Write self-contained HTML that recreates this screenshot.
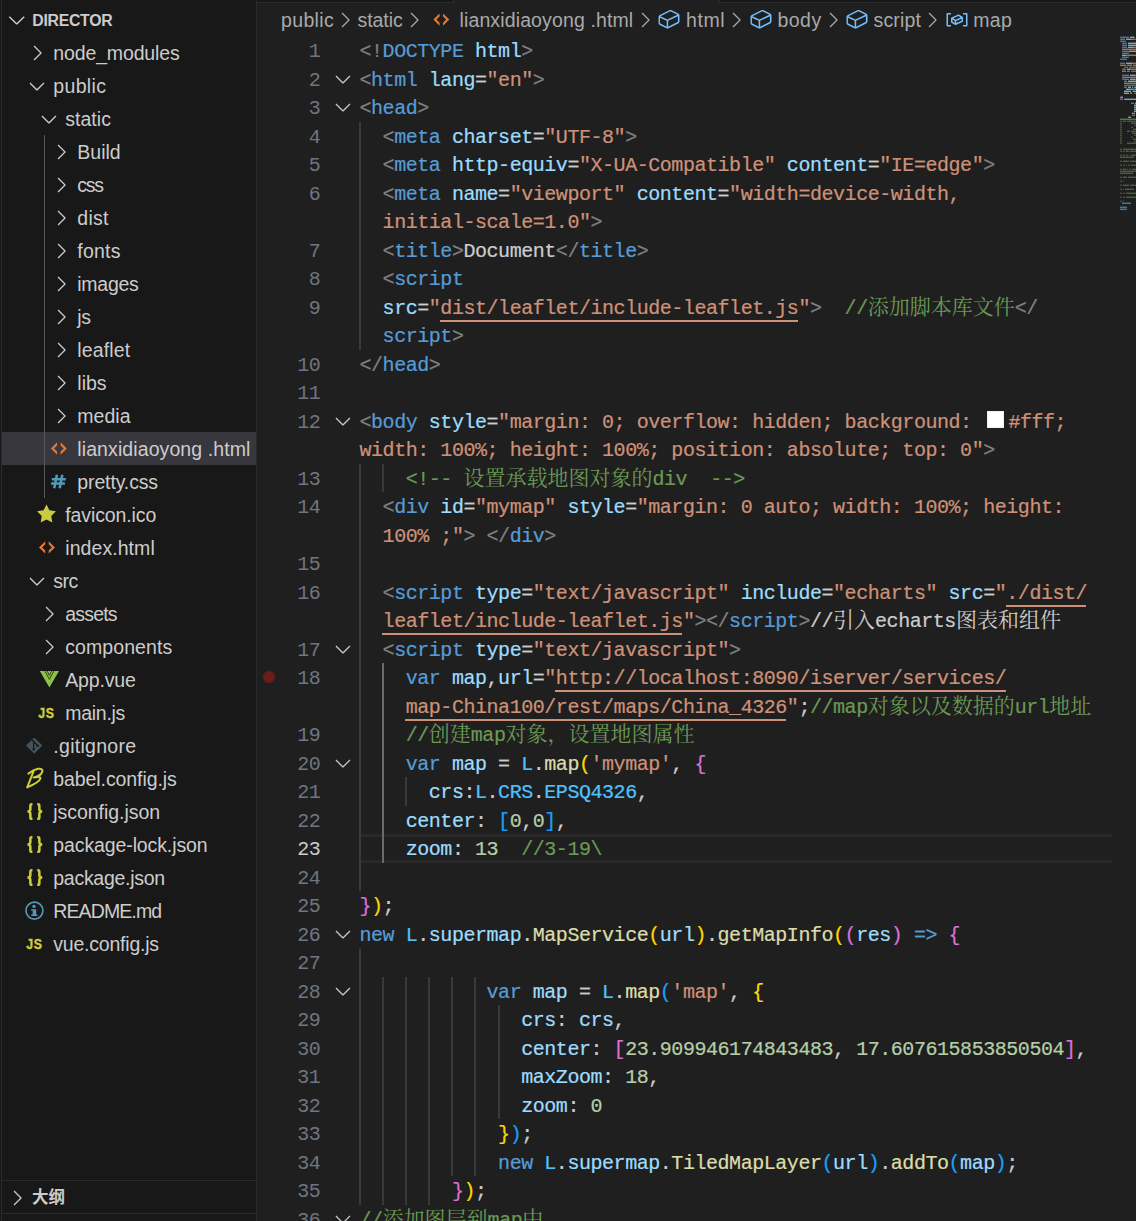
<!DOCTYPE html>
<html><head><meta charset="utf-8"><title>vscode</title>
<style>
html,body{margin:0;padding:0}
body{width:1136px;height:1221px;background:#1f1f1f;position:relative;overflow:hidden;font-family:"Liberation Sans",sans-serif}
div,span,svg{box-sizing:content-box}
.m{position:absolute;font-family:"Liberation Mono",monospace;font-size:20.0px;line-height:28.5px;height:28.5px;letter-spacing:-0.4520px;white-space:pre;-webkit-text-stroke:0.22px}
.c{position:absolute;font-family:"Liberation Mono","Noto Serif CJK SC",monospace;font-size:21px;line-height:28.5px;height:28.5px;letter-spacing:0;white-space:pre}
.ln{position:absolute;font-family:"Liberation Mono",monospace;font-size:20.0px;line-height:28.5px;height:28.5px;letter-spacing:-0.4520px;white-space:pre;color:#6e7681;text-align:right;width:60px;left:260.25px}
.t{position:absolute;font-size:19.5px;line-height:33px;height:33px;white-space:pre;color:#cccccc}
.bc{position:absolute;font-size:19.5px;line-height:33px;height:33px;white-space:pre;color:#a9a9a9;top:3.5px}
.ig{position:absolute;width:2px;background:#404040}
</style></head><body>

<div style="position:absolute;left:0;top:0;width:257px;height:1221px;background:#181818"></div>
<div style="position:absolute;left:1px;top:0;width:1px;height:1221px;background:#2b2b2b"></div>
<div style="position:absolute;left:256px;top:0;width:1px;height:1221px;background:#2b2b2b"></div>
<div style="position:absolute;left:257px;top:0;width:196px;height:2px;background:#181818"></div>
<div style="position:absolute;left:257px;top:2px;width:197px;height:1px;background:#2b2b2b"></div>
<div style="position:absolute;left:453px;top:0;width:1px;height:3px;background:#2b2b2b"></div>
<div style="position:absolute;left:719px;top:0;width:1px;height:3px;background:#2b2b2b"></div>
<div style="position:absolute;left:720px;top:0;width:416px;height:2px;background:#181818"></div>
<div style="position:absolute;left:720px;top:2px;width:416px;height:1px;background:#2b2b2b"></div>
<div style="position:absolute;left:2px;top:432px;width:254px;height:33px;background:#37373d"></div><div style="position:absolute;left:44px;top:135px;width:1px;height:363px;background:#585858"></div><svg style="position:absolute;left:3.7px;top:6.9px" width="25.6" height="25.6" viewBox="0 0 16 16" fill="#cccccc"><path d="M7.976 10.072l4.357-4.357.62.618L8.284 11h-.618L3 6.333l.619-.618 4.357 4.357z"/></svg><span id="hdr" style="position:absolute;left:32.3px;top:4px;font-size:15.8px;font-weight:bold;line-height:33px;color:#cccccc;white-space:pre;letter-spacing:-0.277px">DIRECTOR</span><svg style="position:absolute;left:24.6px;top:40.5px" width="24" height="24" viewBox="0 0 16 16" fill="#cccccc"><path d="M10.072 8.024L5.715 3.667l.618-.62L11 7.716v.618L6.333 13l-.618-.619 4.357-4.357z"/></svg><span class="t" style="left:53.3px;top:36.8px;letter-spacing:-0.136px">node_modules</span><svg style="position:absolute;left:24.6px;top:73.5px" width="24" height="24" viewBox="0 0 16 16" fill="#cccccc"><path d="M7.976 10.072l4.357-4.357.62.618L8.284 11h-.618L3 6.333l.619-.618 4.357 4.357z"/></svg><span class="t" style="left:53.3px;top:69.8px;letter-spacing:0.342px">public</span><svg style="position:absolute;left:36.6px;top:106.5px" width="24" height="24" viewBox="0 0 16 16" fill="#cccccc"><path d="M7.976 10.072l4.357-4.357.62.618L8.284 11h-.618L3 6.333l.619-.618 4.357 4.357z"/></svg><span class="t" style="left:65.3px;top:102.8px;letter-spacing:0.015px">static</span><svg style="position:absolute;left:48.6px;top:139.5px" width="24" height="24" viewBox="0 0 16 16" fill="#cccccc"><path d="M10.072 8.024L5.715 3.667l.618-.62L11 7.716v.618L6.333 13l-.618-.619 4.357-4.357z"/></svg><span class="t" style="left:77.3px;top:135.8px;letter-spacing:0.006px">Build</span><svg style="position:absolute;left:48.6px;top:172.5px" width="24" height="24" viewBox="0 0 16 16" fill="#cccccc"><path d="M10.072 8.024L5.715 3.667l.618-.62L11 7.716v.618L6.333 13l-.618-.619 4.357-4.357z"/></svg><span class="t" style="left:77.3px;top:168.8px;letter-spacing:-1.216px">css</span><svg style="position:absolute;left:48.6px;top:205.5px" width="24" height="24" viewBox="0 0 16 16" fill="#cccccc"><path d="M10.072 8.024L5.715 3.667l.618-.62L11 7.716v.618L6.333 13l-.618-.619 4.357-4.357z"/></svg><span class="t" style="left:77.3px;top:201.8px;letter-spacing:0.236px">dist</span><svg style="position:absolute;left:48.6px;top:238.5px" width="24" height="24" viewBox="0 0 16 16" fill="#cccccc"><path d="M10.072 8.024L5.715 3.667l.618-.62L11 7.716v.618L6.333 13l-.618-.619 4.357-4.357z"/></svg><span class="t" style="left:77.3px;top:234.8px;letter-spacing:0.224px">fonts</span><svg style="position:absolute;left:48.6px;top:271.5px" width="24" height="24" viewBox="0 0 16 16" fill="#cccccc"><path d="M10.072 8.024L5.715 3.667l.618-.62L11 7.716v.618L6.333 13l-.618-.619 4.357-4.357z"/></svg><span class="t" style="left:77.3px;top:267.8px;letter-spacing:-0.262px">images</span><svg style="position:absolute;left:48.6px;top:304.5px" width="24" height="24" viewBox="0 0 16 16" fill="#cccccc"><path d="M10.072 8.024L5.715 3.667l.618-.62L11 7.716v.618L6.333 13l-.618-.619 4.357-4.357z"/></svg><span class="t" style="left:77.3px;top:300.8px;letter-spacing:-0.395px">js</span><svg style="position:absolute;left:48.6px;top:337.5px" width="24" height="24" viewBox="0 0 16 16" fill="#cccccc"><path d="M10.072 8.024L5.715 3.667l.618-.62L11 7.716v.618L6.333 13l-.618-.619 4.357-4.357z"/></svg><span class="t" style="left:77.3px;top:333.8px;letter-spacing:0.137px">leaflet</span><svg style="position:absolute;left:48.6px;top:370.5px" width="24" height="24" viewBox="0 0 16 16" fill="#cccccc"><path d="M10.072 8.024L5.715 3.667l.618-.62L11 7.716v.618L6.333 13l-.618-.619 4.357-4.357z"/></svg><span class="t" style="left:77.3px;top:366.8px;letter-spacing:0.009px">libs</span><svg style="position:absolute;left:48.6px;top:403.5px" width="24" height="24" viewBox="0 0 16 16" fill="#cccccc"><path d="M10.072 8.024L5.715 3.667l.618-.62L11 7.716v.618L6.333 13l-.618-.619 4.357-4.357z"/></svg><span class="t" style="left:77.3px;top:399.8px;letter-spacing:0.036px">media</span><span class="t" style="left:77.3px;top:432.8px;letter-spacing:0.097px">lianxidiaoyong .html</span><span class="t" style="left:77.3px;top:465.8px;letter-spacing:-0.130px">pretty.css</span><span class="t" style="left:65.3px;top:498.8px;letter-spacing:-0.113px">favicon.ico</span><span class="t" style="left:65.3px;top:531.8px;letter-spacing:0.063px">index.html</span><svg style="position:absolute;left:24.6px;top:568.5px" width="24" height="24" viewBox="0 0 16 16" fill="#cccccc"><path d="M7.976 10.072l4.357-4.357.62.618L8.284 11h-.618L3 6.333l.619-.618 4.357 4.357z"/></svg><span class="t" style="left:53.3px;top:564.8px;letter-spacing:-0.532px">src</span><svg style="position:absolute;left:36.6px;top:601.5px" width="24" height="24" viewBox="0 0 16 16" fill="#cccccc"><path d="M10.072 8.024L5.715 3.667l.618-.62L11 7.716v.618L6.333 13l-.618-.619 4.357-4.357z"/></svg><span class="t" style="left:65.3px;top:597.8px;letter-spacing:-0.809px">assets</span><svg style="position:absolute;left:36.6px;top:634.5px" width="24" height="24" viewBox="0 0 16 16" fill="#cccccc"><path d="M10.072 8.024L5.715 3.667l.618-.62L11 7.716v.618L6.333 13l-.618-.619 4.357-4.357z"/></svg><span class="t" style="left:65.3px;top:630.8px;letter-spacing:0.067px">components</span><span class="t" style="left:65.3px;top:663.8px;letter-spacing:-0.180px">App.vue</span><span class="t" style="left:65.3px;top:696.8px;letter-spacing:-0.283px">main.js</span><span class="t" style="left:53.3px;top:729.8px;letter-spacing:0.288px">.gitignore</span><span class="t" style="left:53.3px;top:762.8px;letter-spacing:-0.085px">babel.config.js</span><span class="t" style="left:53.3px;top:795.8px;letter-spacing:-0.047px">jsconfig.json</span><span class="t" style="left:53.3px;top:828.8px;letter-spacing:-0.111px">package-lock.json</span><span class="t" style="left:53.3px;top:861.8px;letter-spacing:-0.285px">package.json</span><span class="t" style="left:53.3px;top:894.8px;letter-spacing:-0.893px">README.md</span><span class="t" style="left:53.3px;top:927.8px;letter-spacing:-0.216px">vue.config.js</span><svg style="position:absolute;left:0;top:0" width="256" height="1221" viewBox="0 0 256 1221"><path fill="#e37933" d="M57.10 442.30 L50.90 448.50 L57.10 454.70 L57.10 451.60 L54.00 448.50 L57.10 445.40Z M60.60 442.30 L66.80 448.50 L60.60 454.70 L60.60 451.60 L63.70 448.50 L60.60 445.40Z"/><path fill="none" stroke="#519aba" stroke-width="2.5" d="M56.90 474.70 L54.20 488.20 M62.30 474.70 L59.70 488.20 M51.80 479.20 H65.80 M51.10 483.50 H64.90"/><path fill="#cbcb41" d="M46.50 504.50 L49.44 510.35 L55.92 511.34 L51.26 515.95 L52.32 522.41 L46.50 519.40 L40.68 522.41 L41.74 515.95 L37.08 511.34 L43.56 510.35Z"/><path fill="#e37933" d="M45.20 541.20 L39.00 547.40 L45.20 553.60 L45.20 550.50 L42.10 547.40 L45.20 544.30Z M48.70 541.20 L54.90 547.40 L48.70 553.60 L48.70 550.50 L51.80 547.40 L48.70 544.30Z"/><path fill="#8dc149" d="M39.8 671.1 H59.0 L49.4 687.6 Z"/><path fill="none" stroke="#181818" stroke-opacity="0.75" stroke-width="1" d="M44.699999999999996 670.6 L49.4 679.4 L54.099999999999994 670.6 M47.0 670.6 L49.4 675.5 L51.8 670.6"/><text x="0" y="0" transform="translate(38.3 718.1) scale(0.80 1)" font-family="Liberation Sans, sans-serif" font-weight="bold" font-size="15.4" fill="#cbcb41" stroke="#cbcb41" stroke-width="0.45" letter-spacing="0.9">JS</text><path fill="#41535b" d="M34.2 737.4 L42.400000000000006 745.6 L34.2 753.8000000000001 L26.000000000000004 745.6 Z"/><path fill="none" stroke="#181818" stroke-width="1.3" d="M32.0 739.7 L37.6 745.6 M33.7 741.4 V749.1"/><circle cx="33.7" cy="749.3000000000001" r="1.2" fill="#181818"/><circle cx="37.7" cy="745.8000000000001" r="1.2" fill="#181818"/><path fill="none" stroke="#d0d03a" stroke-width="2" stroke-linecap="round" stroke-linejoin="round" d="M28.4 773.6 C31.5 771.2 35.0 769.4 38.0 768.8 C42.5 768.0 43.6 770.6 41.0 774.0 C39.0 776.2 36.5 777.0 33.5 777.6 C37.0 776.6 41.0 776.4 40.4 778.6 C39.5 781.8 33.0 785.0 27.2 787.4 M33.6 771.2 L27.2 787.4"/><path fill="none" stroke="#cbcb41" stroke-width="2.5" d="M32.45 804.35 H31.65 Q30.35 804.35 30.35 806.00 V809.30 Q30.35 811.60 27.45 811.60 Q30.35 811.60 30.35 813.90 V817.20 Q30.35 818.85 31.65 818.85 H32.45 M37.25 804.35 H38.05 Q39.35 804.35 39.35 806.00 V809.30 Q39.35 811.60 42.25 811.60 Q39.35 811.60 39.35 813.90 V817.20 Q39.35 818.85 38.05 818.85 H37.25"/><path fill="none" stroke="#cbcb41" stroke-width="2.5" d="M32.45 837.35 H31.65 Q30.35 837.35 30.35 839.00 V842.30 Q30.35 844.60 27.45 844.60 Q30.35 844.60 30.35 846.90 V850.20 Q30.35 851.85 31.65 851.85 H32.45 M37.25 837.35 H38.05 Q39.35 837.35 39.35 839.00 V842.30 Q39.35 844.60 42.25 844.60 Q39.35 844.60 39.35 846.90 V850.20 Q39.35 851.85 38.05 851.85 H37.25"/><path fill="none" stroke="#cbcb41" stroke-width="2.5" d="M32.45 870.35 H31.65 Q30.35 870.35 30.35 872.00 V875.30 Q30.35 877.60 27.45 877.60 Q30.35 877.60 30.35 879.90 V883.20 Q30.35 884.85 31.65 884.85 H32.45 M37.25 870.35 H38.05 Q39.35 870.35 39.35 872.00 V875.30 Q39.35 877.60 42.25 877.60 Q39.35 877.60 39.35 879.90 V883.20 Q39.35 884.85 38.05 884.85 H37.25"/><circle cx="34.45" cy="910.6" r="8.5" fill="none" stroke="#519aba" stroke-width="1.6"/><circle cx="34.0" cy="906.3000000000001" r="1.65" fill="#519aba"/><path fill="#519aba" d="M31.050000000000004 909.2 H36.2 V914.6 H37.400000000000006 V916.1 H31.300000000000004 V914.6 H32.7 V910.5 H31.050000000000004 Z"/><text x="0" y="0" transform="translate(26.3 949.1) scale(0.80 1)" font-family="Liberation Sans, sans-serif" font-weight="bold" font-size="15.4" fill="#cbcb41" stroke="#cbcb41" stroke-width="0.45" letter-spacing="0.9">JS</text></svg><div style="position:absolute;left:2px;top:1180px;width:254px;height:1px;background:#2b2b2b"></div><div style="position:absolute;left:2px;top:1213px;width:254px;height:1px;background:#2b2b2b"></div><svg style="position:absolute;left:4.5px;top:1185.5px" width="24" height="24" viewBox="0 0 16 16" fill="#cccccc"><path d="M10.072 8.024L5.715 3.667l.618-.62L11 7.716v.618L6.333 13l-.618-.619 4.357-4.357z"/></svg><span style="position:absolute;left:32px;top:1180.8px;font-family:'Liberation Sans','Noto Sans CJK SC',sans-serif;font-size:16.5px;font-weight:bold;line-height:33px;height:33px;color:#cccccc;white-space:pre">大纲</span>
<span class="bc" style="left:281.10px;letter-spacing:0.326px">public</span><span class="bc" style="left:357.50px;letter-spacing:-0.069px">static</span><span class="bc" style="left:459.50px;letter-spacing:0.127px">lianxidiaoyong .html</span><span class="bc" style="left:686.00px;letter-spacing:0.564px">html</span><span class="bc" style="left:777.50px;letter-spacing:0.451px">body</span><span class="bc" style="left:873.50px;letter-spacing:0.184px">script</span><span class="bc" style="left:973.30px;letter-spacing:0.289px">map</span><svg style="position:absolute;left:332.8px;top:8px" width="24" height="24" viewBox="0 0 16 16" fill="#a9a9a9"><path d="M10.072 8.024L5.715 3.667l.618-.62L11 7.716v.618L6.333 13l-.618-.619 4.357-4.357z"/></svg><svg style="position:absolute;left:401.9px;top:8px" width="24" height="24" viewBox="0 0 16 16" fill="#a9a9a9"><path d="M10.072 8.024L5.715 3.667l.618-.62L11 7.716v.618L6.333 13l-.618-.619 4.357-4.357z"/></svg><svg style="position:absolute;left:633.3px;top:8px" width="24" height="24" viewBox="0 0 16 16" fill="#a9a9a9"><path d="M10.072 8.024L5.715 3.667l.618-.62L11 7.716v.618L6.333 13l-.618-.619 4.357-4.357z"/></svg><svg style="position:absolute;left:723.8px;top:8px" width="24" height="24" viewBox="0 0 16 16" fill="#a9a9a9"><path d="M10.072 8.024L5.715 3.667l.618-.62L11 7.716v.618L6.333 13l-.618-.619 4.357-4.357z"/></svg><svg style="position:absolute;left:820.8px;top:8px" width="24" height="24" viewBox="0 0 16 16" fill="#a9a9a9"><path d="M10.072 8.024L5.715 3.667l.618-.62L11 7.716v.618L6.333 13l-.618-.619 4.357-4.357z"/></svg><svg style="position:absolute;left:920.2px;top:8px" width="24" height="24" viewBox="0 0 16 16" fill="#a9a9a9"><path d="M10.072 8.024L5.715 3.667l.618-.62L11 7.716v.618L6.333 13l-.618-.619 4.357-4.357z"/></svg><svg style="position:absolute;left:0;top:0" width="1136" height="36"><path fill="#e37933" d="M439.55 13.40 L433.35 19.60 L439.55 25.80 L439.55 22.70 L436.45 19.60 L439.55 16.50Z M443.05 13.40 L449.25 19.60 L443.05 25.80 L443.05 22.70 L446.15 19.60 L443.05 16.50Z"/></svg><svg style="position:absolute;left:657px;top:7px" width="24" height="24" viewBox="0 0 16 16" fill="#75beff"><path d="M14.45 4.5l-5-2.5h-.9l-7 3.5-.55.89v4.5l.55.9 5 2.5h.9l7-3.5.55-.9v-4.5l-.55-.89zm-8 8.64l-4.5-2.25V7.17l4.5 2v3.97zm.5-4.8L2.29 6.23l6.66-3.34 4.67 2.34-6.67 3.11zm7 1.55l-6.5 3.25V9.21l6.5-3v3.68z"/></svg><svg style="position:absolute;left:749px;top:7px" width="24" height="24" viewBox="0 0 16 16" fill="#75beff"><path d="M14.45 4.5l-5-2.5h-.9l-7 3.5-.55.89v4.5l.55.9 5 2.5h.9l7-3.5.55-.9v-4.5l-.55-.89zm-8 8.64l-4.5-2.25V7.17l4.5 2v3.97zm.5-4.8L2.29 6.23l6.66-3.34 4.67 2.34-6.67 3.11zm7 1.55l-6.5 3.25V9.21l6.5-3v3.68z"/></svg><svg style="position:absolute;left:845px;top:7px" width="24" height="24" viewBox="0 0 16 16" fill="#75beff"><path d="M14.45 4.5l-5-2.5h-.9l-7 3.5-.55.89v4.5l.55.9 5 2.5h.9l7-3.5.55-.9v-4.5l-.55-.89zm-8 8.64l-4.5-2.25V7.17l4.5 2v3.97zm.5-4.8L2.29 6.23l6.66-3.34 4.67 2.34-6.67 3.11zm7 1.55l-6.5 3.25V9.21l6.5-3v3.68z"/></svg><svg style="position:absolute;left:944.5px;top:7px" width="24" height="24" viewBox="0 0 16 16" fill="#75beff"><path d="M2 5h2V4H1.5l-.5.5v8l.5.5H4v-1H2V5zm12.5-1H12v1h2v7h-2v1h2.5l.5-.5v-8l-.5-.5zm-2.74 2.57L12 7v2.51l-.3.45-4.5 2h-.46l-2.5-1.5-.24-.43v-2.5l.3-.46 4.5-2h.46l2.5 1.5zM5 9.71l1.5.9V9.28L5 8.38v1.33zm.58-2.15l1.45.87 3.39-1.5-1.45-.87-3.39 1.5zm1.95 3.17l3.5-1.56v-1.4l-3.5 1.55v1.41z"/></svg>
<div style="position:absolute;left:360px;top:834.0px;width:752px;height:3px;background:#292929"></div>
<div style="position:absolute;left:360px;top:860.0px;width:752px;height:3px;background:#292929"></div>
<div class="ig" style="left:359px;top:121.5px;height:228.0px;background:#393939"></div>
<div class="ig" style="left:359px;top:463.5px;height:427.5px;background:#393939"></div>
<div class="ig" style="left:382px;top:463.5px;height:28.5px;background:#393939"></div>
<div class="ig" style="left:382px;top:663.0px;height:199.5px;background:#6a6a6a"></div>
<div class="ig" style="left:405px;top:777.0px;height:28.5px;background:#393939"></div>
<div class="ig" style="left:359px;top:948.0px;height:256.5px;background:#393939"></div>
<div class="ig" style="left:382px;top:976.5px;height:228.0px;background:#393939"></div>
<div class="ig" style="left:405px;top:976.5px;height:228.0px;background:#393939"></div>
<div class="ig" style="left:428px;top:976.5px;height:228.0px;background:#393939"></div>
<div class="ig" style="left:451px;top:976.5px;height:199.5px;background:#393939"></div>
<div class="ig" style="left:474px;top:976.5px;height:199.5px;background:#393939"></div>
<div class="ig" style="left:497.5px;top:1005.0px;height:114.0px;background:#393939"></div>
<span class="ln" style="top:38.40px">1</span>
<span class="m" style="left:359.50px;top:38.40px;color:#808080">&lt;!</span><span class="m" style="left:382.60px;top:38.40px;color:#569cd6">DOCTYPE</span><span class="m" style="left:475.00px;top:38.40px;color:#9cdcfe">html</span><span class="m" style="left:521.20px;top:38.40px;color:#808080">&gt;</span>
<span class="ln" style="top:66.90px">2</span>
<svg style="position:absolute;left:330.7px;top:66.7px" width="24" height="24" viewBox="0 0 16 16" fill="#c5c5c5"><path d="M7.976 10.072l4.357-4.357.62.618L8.284 11h-.618L3 6.333l.619-.618 4.357 4.357z"/></svg>
<span class="m" style="left:359.50px;top:66.90px;color:#808080">&lt;</span><span class="m" style="left:371.05px;top:66.90px;color:#569cd6">html</span><span class="m" style="left:428.80px;top:66.90px;color:#9cdcfe">lang</span><span class="m" style="left:475.00px;top:66.90px;color:#cccccc">=</span><span class="m" style="left:486.55px;top:66.90px;color:#ce9178">"en"</span><span class="m" style="left:532.75px;top:66.90px;color:#808080">&gt;</span>
<span class="ln" style="top:95.40px">3</span>
<svg style="position:absolute;left:330.7px;top:95.2px" width="24" height="24" viewBox="0 0 16 16" fill="#c5c5c5"><path d="M7.976 10.072l4.357-4.357.62.618L8.284 11h-.618L3 6.333l.619-.618 4.357 4.357z"/></svg>
<span class="m" style="left:359.50px;top:95.40px;color:#808080">&lt;</span><span class="m" style="left:371.05px;top:95.40px;color:#569cd6">head</span><span class="m" style="left:417.25px;top:95.40px;color:#808080">&gt;</span>
<span class="ln" style="top:123.90px">4</span>
<span class="m" style="left:382.60px;top:123.90px;color:#808080">&lt;</span><span class="m" style="left:394.15px;top:123.90px;color:#569cd6">meta</span><span class="m" style="left:451.90px;top:123.90px;color:#9cdcfe">charset</span><span class="m" style="left:532.75px;top:123.90px;color:#cccccc">=</span><span class="m" style="left:544.30px;top:123.90px;color:#ce9178">"UTF-8"</span><span class="m" style="left:625.15px;top:123.90px;color:#808080">&gt;</span>
<span class="ln" style="top:152.40px">5</span>
<span class="m" style="left:382.60px;top:152.40px;color:#808080">&lt;</span><span class="m" style="left:394.15px;top:152.40px;color:#569cd6">meta</span><span class="m" style="left:451.90px;top:152.40px;color:#9cdcfe">http-equiv</span><span class="m" style="left:567.40px;top:152.40px;color:#cccccc">=</span><span class="m" style="left:578.95px;top:152.40px;color:#ce9178">"X-UA-Compatible"</span><span class="m" style="left:786.85px;top:152.40px;color:#9cdcfe">content</span><span class="m" style="left:867.70px;top:152.40px;color:#cccccc">=</span><span class="m" style="left:879.25px;top:152.40px;color:#ce9178">"IE=edge"</span><span class="m" style="left:983.20px;top:152.40px;color:#808080">&gt;</span>
<span class="ln" style="top:180.90px">6</span>
<span class="m" style="left:382.60px;top:180.90px;color:#808080">&lt;</span><span class="m" style="left:394.15px;top:180.90px;color:#569cd6">meta</span><span class="m" style="left:451.90px;top:180.90px;color:#9cdcfe">name</span><span class="m" style="left:498.10px;top:180.90px;color:#cccccc">=</span><span class="m" style="left:509.65px;top:180.90px;color:#ce9178">"viewport"</span><span class="m" style="left:636.70px;top:180.90px;color:#9cdcfe">content</span><span class="m" style="left:717.55px;top:180.90px;color:#cccccc">=</span><span class="m" style="left:729.10px;top:180.90px;color:#ce9178">"width=device-width,</span>
<span class="m" style="left:382.60px;top:209.40px;color:#ce9178">initial-scale=1.0"</span><span class="m" style="left:590.50px;top:209.40px;color:#808080">&gt;</span>
<span class="ln" style="top:237.90px">7</span>
<span class="m" style="left:382.60px;top:237.90px;color:#808080">&lt;</span><span class="m" style="left:394.15px;top:237.90px;color:#569cd6">title</span><span class="m" style="left:451.90px;top:237.90px;color:#808080">&gt;</span><span class="m" style="left:463.45px;top:237.90px;color:#cccccc">Document</span><span class="m" style="left:555.85px;top:237.90px;color:#808080">&lt;/</span><span class="m" style="left:578.95px;top:237.90px;color:#569cd6">title</span><span class="m" style="left:636.70px;top:237.90px;color:#808080">&gt;</span>
<span class="ln" style="top:266.40px">8</span>
<span class="m" style="left:382.60px;top:266.40px;color:#808080">&lt;</span><span class="m" style="left:394.15px;top:266.40px;color:#569cd6">script</span>
<span class="ln" style="top:294.90px">9</span>
<span class="m" style="left:382.60px;top:294.90px;color:#9cdcfe">src</span><span class="m" style="left:417.25px;top:294.90px;color:#cccccc">=</span><span class="m" style="left:428.80px;top:294.90px;color:#ce9178">"</span><span class="m" style="left:440.35px;top:294.90px;color:#ce9178">dist/leaflet/include-leaflet.js</span><div style="position:absolute;left:439.65px;top:319.80px;width:358.05px;height:2px;background:#ce9178"></div><span class="m" style="left:798.40px;top:294.90px;color:#ce9178">"</span><span class="m" style="left:809.95px;top:294.90px;color:#808080">&gt;</span><span class="m" style="left:844.60px;top:294.90px;color:#6a9955">//</span><span class="c" style="left:867.7px;top:294.90px;color:#6a9955">添加脚本库文件</span><span class="m" style="left:1014.70px;top:294.90px;color:#808080">&lt;/</span>
<span class="m" style="left:382.60px;top:323.40px;color:#569cd6">script</span><span class="m" style="left:451.90px;top:323.40px;color:#808080">&gt;</span>
<span class="ln" style="top:351.90px">10</span>
<span class="m" style="left:359.50px;top:351.90px;color:#808080">&lt;/</span><span class="m" style="left:382.60px;top:351.90px;color:#569cd6">head</span><span class="m" style="left:428.80px;top:351.90px;color:#808080">&gt;</span>
<span class="ln" style="top:380.40px">11</span>

<span class="ln" style="top:408.90px">12</span>
<svg style="position:absolute;left:330.7px;top:408.7px" width="24" height="24" viewBox="0 0 16 16" fill="#c5c5c5"><path d="M7.976 10.072l4.357-4.357.62.618L8.284 11h-.618L3 6.333l.619-.618 4.357 4.357z"/></svg>
<span class="m" style="left:359.50px;top:408.90px;color:#808080">&lt;</span><span class="m" style="left:371.05px;top:408.90px;color:#569cd6">body</span><span class="m" style="left:428.80px;top:408.90px;color:#9cdcfe">style</span><span class="m" style="left:486.55px;top:408.90px;color:#cccccc">=</span><span class="m" style="left:498.10px;top:408.90px;color:#ce9178">"margin: 0; overflow: hidden; background: </span><div style="position:absolute;left:987.40px;top:411.40px;width:14.2px;height:14.2px;background:#fff;border:1px solid #eee"></div><span class="m" style="left:1008.40px;top:408.90px;color:#ce9178">#fff;</span>
<span class="m" style="left:359.50px;top:437.40px;color:#ce9178">width: 100%; height: 100%; position: absolute; top: 0"</span><span class="m" style="left:983.20px;top:437.40px;color:#808080">&gt;</span>
<span class="ln" style="top:465.90px">13</span>
<span class="m" style="left:405.70px;top:465.90px;color:#6a9955">&lt;!-- </span><span class="c" style="left:463.45px;top:465.90px;color:#6a9955">设置承载地图对象的</span><span class="m" style="left:652.45px;top:465.90px;color:#6a9955">div  --&gt;</span>
<span class="ln" style="top:494.40px">14</span>
<span class="m" style="left:382.60px;top:494.40px;color:#808080">&lt;</span><span class="m" style="left:394.15px;top:494.40px;color:#569cd6">div</span><span class="m" style="left:440.35px;top:494.40px;color:#9cdcfe">id</span><span class="m" style="left:463.45px;top:494.40px;color:#cccccc">=</span><span class="m" style="left:475.00px;top:494.40px;color:#ce9178">"mymap"</span><span class="m" style="left:567.40px;top:494.40px;color:#9cdcfe">style</span><span class="m" style="left:625.15px;top:494.40px;color:#cccccc">=</span><span class="m" style="left:636.70px;top:494.40px;color:#ce9178">"margin: 0 auto; width: 100%; height:</span>
<span class="m" style="left:382.60px;top:522.90px;color:#ce9178">100% ;"</span><span class="m" style="left:463.45px;top:522.90px;color:#808080">&gt;</span><span class="m" style="left:486.55px;top:522.90px;color:#808080">&lt;/</span><span class="m" style="left:509.65px;top:522.90px;color:#569cd6">div</span><span class="m" style="left:544.30px;top:522.90px;color:#808080">&gt;</span>
<span class="ln" style="top:551.40px">15</span>

<span class="ln" style="top:579.90px">16</span>
<span class="m" style="left:382.60px;top:579.90px;color:#808080">&lt;</span><span class="m" style="left:394.15px;top:579.90px;color:#569cd6">script</span><span class="m" style="left:475.00px;top:579.90px;color:#9cdcfe">type</span><span class="m" style="left:521.20px;top:579.90px;color:#cccccc">=</span><span class="m" style="left:532.75px;top:579.90px;color:#ce9178">"text/javascript"</span><span class="m" style="left:740.65px;top:579.90px;color:#9cdcfe">include</span><span class="m" style="left:821.50px;top:579.90px;color:#cccccc">=</span><span class="m" style="left:833.05px;top:579.90px;color:#ce9178">"echarts"</span><span class="m" style="left:948.55px;top:579.90px;color:#9cdcfe">src</span><span class="m" style="left:983.20px;top:579.90px;color:#cccccc">=</span><span class="m" style="left:994.75px;top:579.90px;color:#ce9178">"</span><span class="m" style="left:1006.30px;top:579.90px;color:#ce9178">./dist/</span><div style="position:absolute;left:1005.60px;top:604.80px;width:80.85px;height:2px;background:#ce9178"></div>
<span class="m" style="left:382.60px;top:608.40px;color:#ce9178">leaflet/include-leaflet.js</span><div style="position:absolute;left:381.90px;top:633.30px;width:300.30px;height:2px;background:#ce9178"></div><span class="m" style="left:682.90px;top:608.40px;color:#ce9178">"</span><span class="m" style="left:694.45px;top:608.40px;color:#808080">&gt;</span><span class="m" style="left:706.00px;top:608.40px;color:#808080">&lt;/</span><span class="m" style="left:729.10px;top:608.40px;color:#569cd6">script</span><span class="m" style="left:798.40px;top:608.40px;color:#808080">&gt;</span><span class="m" style="left:809.95px;top:608.40px;color:#cccccc">//</span><span class="c" style="left:833.05px;top:608.40px;color:#cccccc">引入</span><span class="m" style="left:875.05px;top:608.40px;color:#cccccc">echarts</span><span class="c" style="left:955.9px;top:608.40px;color:#cccccc">图表和组件</span>
<span class="ln" style="top:636.90px">17</span>
<svg style="position:absolute;left:330.7px;top:636.7px" width="24" height="24" viewBox="0 0 16 16" fill="#c5c5c5"><path d="M7.976 10.072l4.357-4.357.62.618L8.284 11h-.618L3 6.333l.619-.618 4.357 4.357z"/></svg>
<span class="m" style="left:382.60px;top:636.90px;color:#808080">&lt;</span><span class="m" style="left:394.15px;top:636.90px;color:#569cd6">script</span><span class="m" style="left:475.00px;top:636.90px;color:#9cdcfe">type</span><span class="m" style="left:521.20px;top:636.90px;color:#cccccc">=</span><span class="m" style="left:532.75px;top:636.90px;color:#ce9178">"text/javascript"</span><span class="m" style="left:729.10px;top:636.90px;color:#808080">&gt;</span>
<span class="ln" style="top:665.40px">18</span>
<div style="position:absolute;left:262.8px;top:671.05px;width:12.4px;height:12.4px;border-radius:50%;background:#6b1d1a"></div>
<span class="m" style="left:405.70px;top:665.40px;color:#569cd6">var</span><span class="m" style="left:451.90px;top:665.40px;color:#9cdcfe">map</span><span class="m" style="left:486.55px;top:665.40px;color:#cccccc">,</span><span class="m" style="left:498.10px;top:665.40px;color:#9cdcfe">url</span><span class="m" style="left:532.75px;top:665.40px;color:#cccccc">=</span><span class="m" style="left:544.30px;top:665.40px;color:#ce9178">"</span><span class="m" style="left:555.85px;top:665.40px;color:#ce9178">http:</span><div style="position:absolute;left:555.15px;top:690.30px;width:57.75px;height:2px;background:#ce9178"></div><span class="m" style="left:613.60px;top:665.40px;color:#ce9178">//localhost:8090/iserver/services/</span><div style="position:absolute;left:612.90px;top:690.30px;width:392.70px;height:2px;background:#ce9178"></div>
<span class="m" style="left:405.70px;top:693.90px;color:#ce9178">map-China100/rest/maps/China_4326</span><div style="position:absolute;left:405.00px;top:718.80px;width:381.15px;height:2px;background:#ce9178"></div><span class="m" style="left:786.85px;top:693.90px;color:#ce9178">"</span><span class="m" style="left:798.40px;top:693.90px;color:#cccccc">;</span><span class="m" style="left:809.95px;top:693.90px;color:#6a9955">//map</span><span class="c" style="left:867.7px;top:693.90px;color:#6a9955">对象以及数据的</span><span class="m" style="left:1014.70px;top:693.90px;color:#6a9955">url</span><span class="c" style="left:1049.35px;top:693.90px;color:#6a9955">地址</span>
<span class="ln" style="top:722.40px">19</span>
<span class="m" style="left:405.70px;top:722.40px;color:#6a9955">//</span><span class="c" style="left:428.8px;top:722.40px;color:#6a9955">创建</span><span class="m" style="left:470.80px;top:722.40px;color:#6a9955">map</span><span class="c" style="left:505.45px;top:722.40px;color:#6a9955">对象，设置地图属性</span>
<span class="ln" style="top:750.90px">20</span>
<svg style="position:absolute;left:330.7px;top:750.7px" width="24" height="24" viewBox="0 0 16 16" fill="#c5c5c5"><path d="M7.976 10.072l4.357-4.357.62.618L8.284 11h-.618L3 6.333l.619-.618 4.357 4.357z"/></svg>
<span class="m" style="left:405.70px;top:750.90px;color:#569cd6">var</span><span class="m" style="left:451.90px;top:750.90px;color:#9cdcfe">map</span><span class="m" style="left:486.55px;top:750.90px;color:#cccccc"> = </span><span class="m" style="left:521.20px;top:750.90px;color:#4fc1ff">L</span><span class="m" style="left:532.75px;top:750.90px;color:#cccccc">.</span><span class="m" style="left:544.30px;top:750.90px;color:#dcdcaa">map</span><span class="m" style="left:578.95px;top:750.90px;color:#ffd700">(</span><span class="m" style="left:590.50px;top:750.90px;color:#ce9178">'mymap'</span><span class="m" style="left:671.35px;top:750.90px;color:#cccccc">, </span><span class="m" style="left:694.45px;top:750.90px;color:#da70d6">{</span>
<span class="ln" style="top:779.40px">21</span>
<span class="m" style="left:428.80px;top:779.40px;color:#9cdcfe">crs</span><span class="m" style="left:463.45px;top:779.40px;color:#cccccc">:</span><span class="m" style="left:475.00px;top:779.40px;color:#4fc1ff">L</span><span class="m" style="left:486.55px;top:779.40px;color:#cccccc">.</span><span class="m" style="left:498.10px;top:779.40px;color:#4fc1ff">CRS</span><span class="m" style="left:532.75px;top:779.40px;color:#cccccc">.</span><span class="m" style="left:544.30px;top:779.40px;color:#4fc1ff">EPSQ4326</span><span class="m" style="left:636.70px;top:779.40px;color:#cccccc">,</span>
<span class="ln" style="top:807.90px">22</span>
<span class="m" style="left:405.70px;top:807.90px;color:#9cdcfe">center</span><span class="m" style="left:475.00px;top:807.90px;color:#cccccc">: </span><span class="m" style="left:498.10px;top:807.90px;color:#179fff">[</span><span class="m" style="left:509.65px;top:807.90px;color:#b5cea8">0</span><span class="m" style="left:521.20px;top:807.90px;color:#cccccc">,</span><span class="m" style="left:532.75px;top:807.90px;color:#b5cea8">0</span><span class="m" style="left:544.30px;top:807.90px;color:#179fff">]</span><span class="m" style="left:555.85px;top:807.90px;color:#cccccc">,</span>
<span class="ln" style="top:836.40px;color:#cccccc">23</span>
<span class="m" style="left:405.70px;top:836.40px;color:#9cdcfe">zoom</span><span class="m" style="left:451.90px;top:836.40px;color:#cccccc">: </span><span class="m" style="left:475.00px;top:836.40px;color:#b5cea8">13</span><span class="m" style="left:521.20px;top:836.40px;color:#6a9955">//3-19\</span>
<span class="ln" style="top:864.90px">24</span>

<span class="ln" style="top:893.40px">25</span>
<span class="m" style="left:359.50px;top:893.40px;color:#da70d6">}</span><span class="m" style="left:371.05px;top:893.40px;color:#ffd700">)</span><span class="m" style="left:382.60px;top:893.40px;color:#cccccc">;</span>
<span class="ln" style="top:921.90px">26</span>
<svg style="position:absolute;left:330.7px;top:921.7px" width="24" height="24" viewBox="0 0 16 16" fill="#c5c5c5"><path d="M7.976 10.072l4.357-4.357.62.618L8.284 11h-.618L3 6.333l.619-.618 4.357 4.357z"/></svg>
<span class="m" style="left:359.50px;top:921.90px;color:#569cd6">new</span><span class="m" style="left:405.70px;top:921.90px;color:#4fc1ff">L</span><span class="m" style="left:417.25px;top:921.90px;color:#cccccc">.</span><span class="m" style="left:428.80px;top:921.90px;color:#9cdcfe">supermap</span><span class="m" style="left:521.20px;top:921.90px;color:#cccccc">.</span><span class="m" style="left:532.75px;top:921.90px;color:#dcdcaa">MapService</span><span class="m" style="left:648.25px;top:921.90px;color:#ffd700">(</span><span class="m" style="left:659.80px;top:921.90px;color:#9cdcfe">url</span><span class="m" style="left:694.45px;top:921.90px;color:#ffd700">)</span><span class="m" style="left:706.00px;top:921.90px;color:#cccccc">.</span><span class="m" style="left:717.55px;top:921.90px;color:#dcdcaa">getMapInfo</span><span class="m" style="left:833.05px;top:921.90px;color:#ffd700">(</span><span class="m" style="left:844.60px;top:921.90px;color:#da70d6">(</span><span class="m" style="left:856.15px;top:921.90px;color:#9cdcfe">res</span><span class="m" style="left:890.80px;top:921.90px;color:#da70d6">)</span><span class="m" style="left:913.90px;top:921.90px;color:#569cd6">=&gt;</span><span class="m" style="left:948.55px;top:921.90px;color:#da70d6">{</span>
<span class="ln" style="top:950.40px">27</span>

<span class="ln" style="top:978.90px">28</span>
<svg style="position:absolute;left:330.7px;top:978.7px" width="24" height="24" viewBox="0 0 16 16" fill="#c5c5c5"><path d="M7.976 10.072l4.357-4.357.62.618L8.284 11h-.618L3 6.333l.619-.618 4.357 4.357z"/></svg>
<span class="m" style="left:486.55px;top:978.90px;color:#569cd6">var</span><span class="m" style="left:532.75px;top:978.90px;color:#9cdcfe">map</span><span class="m" style="left:567.40px;top:978.90px;color:#cccccc"> = </span><span class="m" style="left:602.05px;top:978.90px;color:#4fc1ff">L</span><span class="m" style="left:613.60px;top:978.90px;color:#cccccc">.</span><span class="m" style="left:625.15px;top:978.90px;color:#dcdcaa">map</span><span class="m" style="left:659.80px;top:978.90px;color:#179fff">(</span><span class="m" style="left:671.35px;top:978.90px;color:#ce9178">'map'</span><span class="m" style="left:729.10px;top:978.90px;color:#cccccc">, </span><span class="m" style="left:752.20px;top:978.90px;color:#ffd700">{</span>
<span class="ln" style="top:1007.40px">29</span>
<span class="m" style="left:521.20px;top:1007.40px;color:#9cdcfe">crs</span><span class="m" style="left:555.85px;top:1007.40px;color:#cccccc">: </span><span class="m" style="left:578.95px;top:1007.40px;color:#9cdcfe">crs</span><span class="m" style="left:613.60px;top:1007.40px;color:#cccccc">,</span>
<span class="ln" style="top:1035.90px">30</span>
<span class="m" style="left:521.20px;top:1035.90px;color:#9cdcfe">center</span><span class="m" style="left:590.50px;top:1035.90px;color:#cccccc">: </span><span class="m" style="left:613.60px;top:1035.90px;color:#da70d6">[</span><span class="m" style="left:625.15px;top:1035.90px;color:#b5cea8">23.909946174843483</span><span class="m" style="left:833.05px;top:1035.90px;color:#cccccc">, </span><span class="m" style="left:856.15px;top:1035.90px;color:#b5cea8">17.607615853850504</span><span class="m" style="left:1064.05px;top:1035.90px;color:#da70d6">]</span><span class="m" style="left:1075.60px;top:1035.90px;color:#cccccc">,</span>
<span class="ln" style="top:1064.40px">31</span>
<span class="m" style="left:521.20px;top:1064.40px;color:#9cdcfe">maxZoom</span><span class="m" style="left:602.05px;top:1064.40px;color:#cccccc">: </span><span class="m" style="left:625.15px;top:1064.40px;color:#b5cea8">18</span><span class="m" style="left:648.25px;top:1064.40px;color:#cccccc">,</span>
<span class="ln" style="top:1092.90px">32</span>
<span class="m" style="left:521.20px;top:1092.90px;color:#9cdcfe">zoom</span><span class="m" style="left:567.40px;top:1092.90px;color:#cccccc">: </span><span class="m" style="left:590.50px;top:1092.90px;color:#b5cea8">0</span>
<span class="ln" style="top:1121.40px">33</span>
<span class="m" style="left:498.10px;top:1121.40px;color:#ffd700">}</span><span class="m" style="left:509.65px;top:1121.40px;color:#179fff">)</span><span class="m" style="left:521.20px;top:1121.40px;color:#cccccc">;</span>
<span class="ln" style="top:1149.90px">34</span>
<span class="m" style="left:498.10px;top:1149.90px;color:#569cd6">new</span><span class="m" style="left:544.30px;top:1149.90px;color:#4fc1ff">L</span><span class="m" style="left:555.85px;top:1149.90px;color:#cccccc">.</span><span class="m" style="left:567.40px;top:1149.90px;color:#9cdcfe">supermap</span><span class="m" style="left:659.80px;top:1149.90px;color:#cccccc">.</span><span class="m" style="left:671.35px;top:1149.90px;color:#dcdcaa">TiledMapLayer</span><span class="m" style="left:821.50px;top:1149.90px;color:#179fff">(</span><span class="m" style="left:833.05px;top:1149.90px;color:#9cdcfe">url</span><span class="m" style="left:867.70px;top:1149.90px;color:#179fff">)</span><span class="m" style="left:879.25px;top:1149.90px;color:#cccccc">.</span><span class="m" style="left:890.80px;top:1149.90px;color:#dcdcaa">addTo</span><span class="m" style="left:948.55px;top:1149.90px;color:#179fff">(</span><span class="m" style="left:960.10px;top:1149.90px;color:#9cdcfe">map</span><span class="m" style="left:994.75px;top:1149.90px;color:#179fff">)</span><span class="m" style="left:1006.30px;top:1149.90px;color:#cccccc">;</span>
<span class="ln" style="top:1178.40px">35</span>
<span class="m" style="left:451.90px;top:1178.40px;color:#da70d6">}</span><span class="m" style="left:463.45px;top:1178.40px;color:#ffd700">)</span><span class="m" style="left:475.00px;top:1178.40px;color:#cccccc">;</span>
<span class="ln" style="top:1206.90px">36</span>
<svg style="position:absolute;left:330.7px;top:1206.7px" width="24" height="24" viewBox="0 0 16 16" fill="#c5c5c5"><path d="M7.976 10.072l4.357-4.357.62.618L8.284 11h-.618L3 6.333l.619-.618 4.357 4.357z"/></svg>
<span class="m" style="left:359.50px;top:1206.90px;color:#6a9955">//</span><span class="c" style="left:382.6px;top:1206.90px;color:#6a9955">添加图层到</span><span class="m" style="left:487.60px;top:1206.90px;color:#6a9955">map</span><span class="c" style="left:522.25px;top:1206.90px;color:#6a9955">中</span>
<div style="position:absolute;left:1120px;top:36px;width:16px;height:180px;overflow:hidden;opacity:0.72"><i style="position:absolute;left:0px;top:0px;width:1px;height:2px;background:#808080"></i><i style="position:absolute;left:1px;top:0px;width:1px;height:2px;background:#808080"></i><i style="position:absolute;left:2px;top:0px;width:1px;height:2px;background:#569cd6"></i><i style="position:absolute;left:3px;top:0px;width:1px;height:2px;background:#569cd6"></i><i style="position:absolute;left:4px;top:0px;width:1px;height:2px;background:#569cd6"></i><i style="position:absolute;left:5px;top:0px;width:1px;height:2px;background:#569cd6"></i><i style="position:absolute;left:6px;top:0px;width:1px;height:2px;background:#569cd6"></i><i style="position:absolute;left:7px;top:0px;width:1px;height:2px;background:#569cd6"></i><i style="position:absolute;left:8px;top:0px;width:1px;height:2px;background:#569cd6"></i><i style="position:absolute;left:10px;top:0px;width:1px;height:2px;background:#9cdcfe"></i><i style="position:absolute;left:11px;top:0px;width:1px;height:2px;background:#9cdcfe"></i><i style="position:absolute;left:12px;top:0px;width:1px;height:2px;background:#9cdcfe"></i><i style="position:absolute;left:13px;top:0px;width:1px;height:2px;background:#9cdcfe"></i><i style="position:absolute;left:14px;top:0px;width:1px;height:2px;background:#808080"></i><i style="position:absolute;left:0px;top:2px;width:1px;height:2px;background:#808080"></i><i style="position:absolute;left:1px;top:2px;width:1px;height:2px;background:#569cd6"></i><i style="position:absolute;left:2px;top:2px;width:1px;height:2px;background:#569cd6"></i><i style="position:absolute;left:3px;top:2px;width:1px;height:2px;background:#569cd6"></i><i style="position:absolute;left:4px;top:2px;width:1px;height:2px;background:#569cd6"></i><i style="position:absolute;left:6px;top:2px;width:1px;height:2px;background:#9cdcfe"></i><i style="position:absolute;left:7px;top:2px;width:1px;height:2px;background:#9cdcfe"></i><i style="position:absolute;left:8px;top:2px;width:1px;height:2px;background:#9cdcfe"></i><i style="position:absolute;left:9px;top:2px;width:1px;height:2px;background:#9cdcfe"></i><i style="position:absolute;left:10px;top:2px;width:1px;height:2px;background:#cccccc"></i><i style="position:absolute;left:11px;top:2px;width:1px;height:2px;background:#ce9178"></i><i style="position:absolute;left:12px;top:2px;width:1px;height:2px;background:#ce9178"></i><i style="position:absolute;left:13px;top:2px;width:1px;height:2px;background:#ce9178"></i><i style="position:absolute;left:14px;top:2px;width:1px;height:2px;background:#ce9178"></i><i style="position:absolute;left:15px;top:2px;width:1px;height:2px;background:#808080"></i><i style="position:absolute;left:0px;top:4px;width:1px;height:2px;background:#808080"></i><i style="position:absolute;left:1px;top:4px;width:1px;height:2px;background:#569cd6"></i><i style="position:absolute;left:2px;top:4px;width:1px;height:2px;background:#569cd6"></i><i style="position:absolute;left:3px;top:4px;width:1px;height:2px;background:#569cd6"></i><i style="position:absolute;left:4px;top:4px;width:1px;height:2px;background:#569cd6"></i><i style="position:absolute;left:5px;top:4px;width:1px;height:2px;background:#808080"></i><i style="position:absolute;left:2px;top:6px;width:1px;height:2px;background:#808080"></i><i style="position:absolute;left:3px;top:6px;width:1px;height:2px;background:#569cd6"></i><i style="position:absolute;left:4px;top:6px;width:1px;height:2px;background:#569cd6"></i><i style="position:absolute;left:5px;top:6px;width:1px;height:2px;background:#569cd6"></i><i style="position:absolute;left:6px;top:6px;width:1px;height:2px;background:#569cd6"></i><i style="position:absolute;left:8px;top:6px;width:1px;height:2px;background:#9cdcfe"></i><i style="position:absolute;left:9px;top:6px;width:1px;height:2px;background:#9cdcfe"></i><i style="position:absolute;left:10px;top:6px;width:1px;height:2px;background:#9cdcfe"></i><i style="position:absolute;left:11px;top:6px;width:1px;height:2px;background:#9cdcfe"></i><i style="position:absolute;left:12px;top:6px;width:1px;height:2px;background:#9cdcfe"></i><i style="position:absolute;left:13px;top:6px;width:1px;height:2px;background:#9cdcfe"></i><i style="position:absolute;left:14px;top:6px;width:1px;height:2px;background:#9cdcfe"></i><i style="position:absolute;left:15px;top:6px;width:1px;height:2px;background:#cccccc"></i><i style="position:absolute;left:2px;top:8px;width:1px;height:2px;background:#808080"></i><i style="position:absolute;left:3px;top:8px;width:1px;height:2px;background:#569cd6"></i><i style="position:absolute;left:4px;top:8px;width:1px;height:2px;background:#569cd6"></i><i style="position:absolute;left:5px;top:8px;width:1px;height:2px;background:#569cd6"></i><i style="position:absolute;left:6px;top:8px;width:1px;height:2px;background:#569cd6"></i><i style="position:absolute;left:8px;top:8px;width:1px;height:2px;background:#9cdcfe"></i><i style="position:absolute;left:9px;top:8px;width:1px;height:2px;background:#9cdcfe"></i><i style="position:absolute;left:10px;top:8px;width:1px;height:2px;background:#9cdcfe"></i><i style="position:absolute;left:11px;top:8px;width:1px;height:2px;background:#9cdcfe"></i><i style="position:absolute;left:12px;top:8px;width:1px;height:2px;background:#9cdcfe"></i><i style="position:absolute;left:13px;top:8px;width:1px;height:2px;background:#9cdcfe"></i><i style="position:absolute;left:14px;top:8px;width:1px;height:2px;background:#9cdcfe"></i><i style="position:absolute;left:15px;top:8px;width:1px;height:2px;background:#9cdcfe"></i><i style="position:absolute;left:2px;top:10px;width:1px;height:2px;background:#808080"></i><i style="position:absolute;left:3px;top:10px;width:1px;height:2px;background:#569cd6"></i><i style="position:absolute;left:4px;top:10px;width:1px;height:2px;background:#569cd6"></i><i style="position:absolute;left:5px;top:10px;width:1px;height:2px;background:#569cd6"></i><i style="position:absolute;left:6px;top:10px;width:1px;height:2px;background:#569cd6"></i><i style="position:absolute;left:8px;top:10px;width:1px;height:2px;background:#9cdcfe"></i><i style="position:absolute;left:9px;top:10px;width:1px;height:2px;background:#9cdcfe"></i><i style="position:absolute;left:10px;top:10px;width:1px;height:2px;background:#9cdcfe"></i><i style="position:absolute;left:11px;top:10px;width:1px;height:2px;background:#9cdcfe"></i><i style="position:absolute;left:12px;top:10px;width:1px;height:2px;background:#cccccc"></i><i style="position:absolute;left:13px;top:10px;width:1px;height:2px;background:#ce9178"></i><i style="position:absolute;left:14px;top:10px;width:1px;height:2px;background:#ce9178"></i><i style="position:absolute;left:15px;top:10px;width:1px;height:2px;background:#ce9178"></i><i style="position:absolute;left:2px;top:12px;width:1px;height:2px;background:#ce9178"></i><i style="position:absolute;left:3px;top:12px;width:1px;height:2px;background:#ce9178"></i><i style="position:absolute;left:4px;top:12px;width:1px;height:2px;background:#ce9178"></i><i style="position:absolute;left:5px;top:12px;width:1px;height:2px;background:#ce9178"></i><i style="position:absolute;left:6px;top:12px;width:1px;height:2px;background:#ce9178"></i><i style="position:absolute;left:7px;top:12px;width:1px;height:2px;background:#ce9178"></i><i style="position:absolute;left:8px;top:12px;width:1px;height:2px;background:#ce9178"></i><i style="position:absolute;left:9px;top:12px;width:1px;height:2px;background:#ce9178"></i><i style="position:absolute;left:10px;top:12px;width:1px;height:2px;background:#ce9178"></i><i style="position:absolute;left:11px;top:12px;width:1px;height:2px;background:#ce9178"></i><i style="position:absolute;left:12px;top:12px;width:1px;height:2px;background:#ce9178"></i><i style="position:absolute;left:13px;top:12px;width:1px;height:2px;background:#ce9178"></i><i style="position:absolute;left:14px;top:12px;width:1px;height:2px;background:#ce9178"></i><i style="position:absolute;left:15px;top:12px;width:1px;height:2px;background:#ce9178"></i><i style="position:absolute;left:2px;top:14px;width:1px;height:2px;background:#808080"></i><i style="position:absolute;left:3px;top:14px;width:1px;height:2px;background:#569cd6"></i><i style="position:absolute;left:4px;top:14px;width:1px;height:2px;background:#569cd6"></i><i style="position:absolute;left:5px;top:14px;width:1px;height:2px;background:#569cd6"></i><i style="position:absolute;left:6px;top:14px;width:1px;height:2px;background:#569cd6"></i><i style="position:absolute;left:7px;top:14px;width:1px;height:2px;background:#569cd6"></i><i style="position:absolute;left:8px;top:14px;width:1px;height:2px;background:#808080"></i><i style="position:absolute;left:9px;top:14px;width:1px;height:2px;background:#cccccc"></i><i style="position:absolute;left:10px;top:14px;width:1px;height:2px;background:#cccccc"></i><i style="position:absolute;left:11px;top:14px;width:1px;height:2px;background:#cccccc"></i><i style="position:absolute;left:12px;top:14px;width:1px;height:2px;background:#cccccc"></i><i style="position:absolute;left:13px;top:14px;width:1px;height:2px;background:#cccccc"></i><i style="position:absolute;left:14px;top:14px;width:1px;height:2px;background:#cccccc"></i><i style="position:absolute;left:15px;top:14px;width:1px;height:2px;background:#cccccc"></i><i style="position:absolute;left:2px;top:16px;width:1px;height:2px;background:#808080"></i><i style="position:absolute;left:3px;top:16px;width:1px;height:2px;background:#569cd6"></i><i style="position:absolute;left:4px;top:16px;width:1px;height:2px;background:#569cd6"></i><i style="position:absolute;left:5px;top:16px;width:1px;height:2px;background:#569cd6"></i><i style="position:absolute;left:6px;top:16px;width:1px;height:2px;background:#569cd6"></i><i style="position:absolute;left:7px;top:16px;width:1px;height:2px;background:#569cd6"></i><i style="position:absolute;left:8px;top:16px;width:1px;height:2px;background:#569cd6"></i><i style="position:absolute;left:2px;top:18px;width:1px;height:2px;background:#9cdcfe"></i><i style="position:absolute;left:3px;top:18px;width:1px;height:2px;background:#9cdcfe"></i><i style="position:absolute;left:4px;top:18px;width:1px;height:2px;background:#9cdcfe"></i><i style="position:absolute;left:5px;top:18px;width:1px;height:2px;background:#cccccc"></i><i style="position:absolute;left:6px;top:18px;width:1px;height:2px;background:#ce9178"></i><i style="position:absolute;left:7px;top:18px;width:1px;height:2px;background:#ce9178"></i><i style="position:absolute;left:8px;top:18px;width:1px;height:2px;background:#ce9178"></i><i style="position:absolute;left:9px;top:18px;width:1px;height:2px;background:#ce9178"></i><i style="position:absolute;left:10px;top:18px;width:1px;height:2px;background:#ce9178"></i><i style="position:absolute;left:11px;top:18px;width:1px;height:2px;background:#ce9178"></i><i style="position:absolute;left:12px;top:18px;width:1px;height:2px;background:#ce9178"></i><i style="position:absolute;left:13px;top:18px;width:1px;height:2px;background:#ce9178"></i><i style="position:absolute;left:14px;top:18px;width:1px;height:2px;background:#ce9178"></i><i style="position:absolute;left:15px;top:18px;width:1px;height:2px;background:#ce9178"></i><i style="position:absolute;left:2px;top:20px;width:1px;height:2px;background:#569cd6"></i><i style="position:absolute;left:3px;top:20px;width:1px;height:2px;background:#569cd6"></i><i style="position:absolute;left:4px;top:20px;width:1px;height:2px;background:#569cd6"></i><i style="position:absolute;left:5px;top:20px;width:1px;height:2px;background:#569cd6"></i><i style="position:absolute;left:6px;top:20px;width:1px;height:2px;background:#569cd6"></i><i style="position:absolute;left:7px;top:20px;width:1px;height:2px;background:#569cd6"></i><i style="position:absolute;left:8px;top:20px;width:1px;height:2px;background:#808080"></i><i style="position:absolute;left:0px;top:22px;width:1px;height:2px;background:#808080"></i><i style="position:absolute;left:1px;top:22px;width:1px;height:2px;background:#808080"></i><i style="position:absolute;left:2px;top:22px;width:1px;height:2px;background:#569cd6"></i><i style="position:absolute;left:3px;top:22px;width:1px;height:2px;background:#569cd6"></i><i style="position:absolute;left:4px;top:22px;width:1px;height:2px;background:#569cd6"></i><i style="position:absolute;left:5px;top:22px;width:1px;height:2px;background:#569cd6"></i><i style="position:absolute;left:6px;top:22px;width:1px;height:2px;background:#808080"></i><i style="position:absolute;left:0px;top:26px;width:1px;height:2px;background:#808080"></i><i style="position:absolute;left:1px;top:26px;width:1px;height:2px;background:#569cd6"></i><i style="position:absolute;left:2px;top:26px;width:1px;height:2px;background:#569cd6"></i><i style="position:absolute;left:3px;top:26px;width:1px;height:2px;background:#569cd6"></i><i style="position:absolute;left:4px;top:26px;width:1px;height:2px;background:#569cd6"></i><i style="position:absolute;left:6px;top:26px;width:1px;height:2px;background:#9cdcfe"></i><i style="position:absolute;left:7px;top:26px;width:1px;height:2px;background:#9cdcfe"></i><i style="position:absolute;left:8px;top:26px;width:1px;height:2px;background:#9cdcfe"></i><i style="position:absolute;left:9px;top:26px;width:1px;height:2px;background:#9cdcfe"></i><i style="position:absolute;left:10px;top:26px;width:1px;height:2px;background:#9cdcfe"></i><i style="position:absolute;left:11px;top:26px;width:1px;height:2px;background:#cccccc"></i><i style="position:absolute;left:12px;top:26px;width:1px;height:2px;background:#ce9178"></i><i style="position:absolute;left:13px;top:26px;width:1px;height:2px;background:#ce9178"></i><i style="position:absolute;left:14px;top:26px;width:1px;height:2px;background:#ce9178"></i><i style="position:absolute;left:15px;top:26px;width:1px;height:2px;background:#ce9178"></i><i style="position:absolute;left:0px;top:28px;width:1px;height:2px;background:#ce9178"></i><i style="position:absolute;left:1px;top:28px;width:1px;height:2px;background:#ce9178"></i><i style="position:absolute;left:2px;top:28px;width:1px;height:2px;background:#ce9178"></i><i style="position:absolute;left:3px;top:28px;width:1px;height:2px;background:#ce9178"></i><i style="position:absolute;left:4px;top:28px;width:1px;height:2px;background:#ce9178"></i><i style="position:absolute;left:5px;top:28px;width:1px;height:2px;background:#ce9178"></i><i style="position:absolute;left:7px;top:28px;width:1px;height:2px;background:#ce9178"></i><i style="position:absolute;left:8px;top:28px;width:1px;height:2px;background:#ce9178"></i><i style="position:absolute;left:9px;top:28px;width:1px;height:2px;background:#ce9178"></i><i style="position:absolute;left:10px;top:28px;width:1px;height:2px;background:#ce9178"></i><i style="position:absolute;left:11px;top:28px;width:1px;height:2px;background:#ce9178"></i><i style="position:absolute;left:13px;top:28px;width:1px;height:2px;background:#ce9178"></i><i style="position:absolute;left:14px;top:28px;width:1px;height:2px;background:#ce9178"></i><i style="position:absolute;left:15px;top:28px;width:1px;height:2px;background:#ce9178"></i><i style="position:absolute;left:4px;top:30px;width:1px;height:2px;background:#6a9955"></i><i style="position:absolute;left:5px;top:30px;width:1px;height:2px;background:#6a9955"></i><i style="position:absolute;left:6px;top:30px;width:1px;height:2px;background:#6a9955"></i><i style="position:absolute;left:7px;top:30px;width:1px;height:2px;background:#6a9955"></i><i style="position:absolute;left:9px;top:30px;width:2px;height:2px;background:#6a9955"></i><i style="position:absolute;left:11px;top:30px;width:2px;height:2px;background:#6a9955"></i><i style="position:absolute;left:13px;top:30px;width:2px;height:2px;background:#6a9955"></i><i style="position:absolute;left:15px;top:30px;width:2px;height:2px;background:#6a9955"></i><i style="position:absolute;left:2px;top:32px;width:1px;height:2px;background:#808080"></i><i style="position:absolute;left:3px;top:32px;width:1px;height:2px;background:#569cd6"></i><i style="position:absolute;left:4px;top:32px;width:1px;height:2px;background:#569cd6"></i><i style="position:absolute;left:5px;top:32px;width:1px;height:2px;background:#569cd6"></i><i style="position:absolute;left:7px;top:32px;width:1px;height:2px;background:#9cdcfe"></i><i style="position:absolute;left:8px;top:32px;width:1px;height:2px;background:#9cdcfe"></i><i style="position:absolute;left:9px;top:32px;width:1px;height:2px;background:#cccccc"></i><i style="position:absolute;left:10px;top:32px;width:1px;height:2px;background:#ce9178"></i><i style="position:absolute;left:11px;top:32px;width:1px;height:2px;background:#ce9178"></i><i style="position:absolute;left:12px;top:32px;width:1px;height:2px;background:#ce9178"></i><i style="position:absolute;left:13px;top:32px;width:1px;height:2px;background:#ce9178"></i><i style="position:absolute;left:14px;top:32px;width:1px;height:2px;background:#ce9178"></i><i style="position:absolute;left:15px;top:32px;width:1px;height:2px;background:#ce9178"></i><i style="position:absolute;left:2px;top:34px;width:1px;height:2px;background:#ce9178"></i><i style="position:absolute;left:3px;top:34px;width:1px;height:2px;background:#ce9178"></i><i style="position:absolute;left:4px;top:34px;width:1px;height:2px;background:#ce9178"></i><i style="position:absolute;left:5px;top:34px;width:1px;height:2px;background:#ce9178"></i><i style="position:absolute;left:7px;top:34px;width:1px;height:2px;background:#ce9178"></i><i style="position:absolute;left:8px;top:34px;width:1px;height:2px;background:#ce9178"></i><i style="position:absolute;left:9px;top:34px;width:1px;height:2px;background:#808080"></i><i style="position:absolute;left:11px;top:34px;width:1px;height:2px;background:#808080"></i><i style="position:absolute;left:12px;top:34px;width:1px;height:2px;background:#808080"></i><i style="position:absolute;left:13px;top:34px;width:1px;height:2px;background:#569cd6"></i><i style="position:absolute;left:14px;top:34px;width:1px;height:2px;background:#569cd6"></i><i style="position:absolute;left:15px;top:34px;width:1px;height:2px;background:#569cd6"></i><i style="position:absolute;left:2px;top:38px;width:1px;height:2px;background:#808080"></i><i style="position:absolute;left:3px;top:38px;width:1px;height:2px;background:#569cd6"></i><i style="position:absolute;left:4px;top:38px;width:1px;height:2px;background:#569cd6"></i><i style="position:absolute;left:5px;top:38px;width:1px;height:2px;background:#569cd6"></i><i style="position:absolute;left:6px;top:38px;width:1px;height:2px;background:#569cd6"></i><i style="position:absolute;left:7px;top:38px;width:1px;height:2px;background:#569cd6"></i><i style="position:absolute;left:8px;top:38px;width:1px;height:2px;background:#569cd6"></i><i style="position:absolute;left:10px;top:38px;width:1px;height:2px;background:#9cdcfe"></i><i style="position:absolute;left:11px;top:38px;width:1px;height:2px;background:#9cdcfe"></i><i style="position:absolute;left:12px;top:38px;width:1px;height:2px;background:#9cdcfe"></i><i style="position:absolute;left:13px;top:38px;width:1px;height:2px;background:#9cdcfe"></i><i style="position:absolute;left:14px;top:38px;width:1px;height:2px;background:#cccccc"></i><i style="position:absolute;left:15px;top:38px;width:1px;height:2px;background:#ce9178"></i><i style="position:absolute;left:2px;top:40px;width:1px;height:2px;background:#ce9178"></i><i style="position:absolute;left:3px;top:40px;width:1px;height:2px;background:#ce9178"></i><i style="position:absolute;left:4px;top:40px;width:1px;height:2px;background:#ce9178"></i><i style="position:absolute;left:5px;top:40px;width:1px;height:2px;background:#ce9178"></i><i style="position:absolute;left:6px;top:40px;width:1px;height:2px;background:#ce9178"></i><i style="position:absolute;left:7px;top:40px;width:1px;height:2px;background:#ce9178"></i><i style="position:absolute;left:8px;top:40px;width:1px;height:2px;background:#ce9178"></i><i style="position:absolute;left:9px;top:40px;width:1px;height:2px;background:#ce9178"></i><i style="position:absolute;left:10px;top:40px;width:1px;height:2px;background:#ce9178"></i><i style="position:absolute;left:11px;top:40px;width:1px;height:2px;background:#ce9178"></i><i style="position:absolute;left:12px;top:40px;width:1px;height:2px;background:#ce9178"></i><i style="position:absolute;left:13px;top:40px;width:1px;height:2px;background:#ce9178"></i><i style="position:absolute;left:14px;top:40px;width:1px;height:2px;background:#ce9178"></i><i style="position:absolute;left:15px;top:40px;width:1px;height:2px;background:#ce9178"></i><i style="position:absolute;left:2px;top:42px;width:1px;height:2px;background:#808080"></i><i style="position:absolute;left:3px;top:42px;width:1px;height:2px;background:#569cd6"></i><i style="position:absolute;left:4px;top:42px;width:1px;height:2px;background:#569cd6"></i><i style="position:absolute;left:5px;top:42px;width:1px;height:2px;background:#569cd6"></i><i style="position:absolute;left:6px;top:42px;width:1px;height:2px;background:#569cd6"></i><i style="position:absolute;left:7px;top:42px;width:1px;height:2px;background:#569cd6"></i><i style="position:absolute;left:8px;top:42px;width:1px;height:2px;background:#569cd6"></i><i style="position:absolute;left:10px;top:42px;width:1px;height:2px;background:#9cdcfe"></i><i style="position:absolute;left:11px;top:42px;width:1px;height:2px;background:#9cdcfe"></i><i style="position:absolute;left:12px;top:42px;width:1px;height:2px;background:#9cdcfe"></i><i style="position:absolute;left:13px;top:42px;width:1px;height:2px;background:#9cdcfe"></i><i style="position:absolute;left:14px;top:42px;width:1px;height:2px;background:#cccccc"></i><i style="position:absolute;left:15px;top:42px;width:1px;height:2px;background:#ce9178"></i><i style="position:absolute;left:4px;top:44px;width:1px;height:2px;background:#569cd6"></i><i style="position:absolute;left:5px;top:44px;width:1px;height:2px;background:#569cd6"></i><i style="position:absolute;left:6px;top:44px;width:1px;height:2px;background:#569cd6"></i><i style="position:absolute;left:8px;top:44px;width:1px;height:2px;background:#9cdcfe"></i><i style="position:absolute;left:9px;top:44px;width:1px;height:2px;background:#9cdcfe"></i><i style="position:absolute;left:10px;top:44px;width:1px;height:2px;background:#9cdcfe"></i><i style="position:absolute;left:11px;top:44px;width:1px;height:2px;background:#cccccc"></i><i style="position:absolute;left:12px;top:44px;width:1px;height:2px;background:#9cdcfe"></i><i style="position:absolute;left:13px;top:44px;width:1px;height:2px;background:#9cdcfe"></i><i style="position:absolute;left:14px;top:44px;width:1px;height:2px;background:#9cdcfe"></i><i style="position:absolute;left:15px;top:44px;width:1px;height:2px;background:#cccccc"></i><i style="position:absolute;left:4px;top:46px;width:1px;height:2px;background:#ce9178"></i><i style="position:absolute;left:5px;top:46px;width:1px;height:2px;background:#ce9178"></i><i style="position:absolute;left:6px;top:46px;width:1px;height:2px;background:#ce9178"></i><i style="position:absolute;left:7px;top:46px;width:1px;height:2px;background:#ce9178"></i><i style="position:absolute;left:8px;top:46px;width:1px;height:2px;background:#ce9178"></i><i style="position:absolute;left:9px;top:46px;width:1px;height:2px;background:#ce9178"></i><i style="position:absolute;left:10px;top:46px;width:1px;height:2px;background:#ce9178"></i><i style="position:absolute;left:11px;top:46px;width:1px;height:2px;background:#ce9178"></i><i style="position:absolute;left:12px;top:46px;width:1px;height:2px;background:#ce9178"></i><i style="position:absolute;left:13px;top:46px;width:1px;height:2px;background:#ce9178"></i><i style="position:absolute;left:14px;top:46px;width:1px;height:2px;background:#ce9178"></i><i style="position:absolute;left:15px;top:46px;width:1px;height:2px;background:#ce9178"></i><i style="position:absolute;left:4px;top:48px;width:1px;height:2px;background:#6a9955"></i><i style="position:absolute;left:5px;top:48px;width:1px;height:2px;background:#6a9955"></i><i style="position:absolute;left:6px;top:48px;width:2px;height:2px;background:#6a9955"></i><i style="position:absolute;left:8px;top:48px;width:2px;height:2px;background:#6a9955"></i><i style="position:absolute;left:10px;top:48px;width:1px;height:2px;background:#6a9955"></i><i style="position:absolute;left:11px;top:48px;width:1px;height:2px;background:#6a9955"></i><i style="position:absolute;left:12px;top:48px;width:1px;height:2px;background:#6a9955"></i><i style="position:absolute;left:13px;top:48px;width:2px;height:2px;background:#6a9955"></i><i style="position:absolute;left:15px;top:48px;width:2px;height:2px;background:#6a9955"></i><i style="position:absolute;left:4px;top:50px;width:1px;height:2px;background:#569cd6"></i><i style="position:absolute;left:5px;top:50px;width:1px;height:2px;background:#569cd6"></i><i style="position:absolute;left:6px;top:50px;width:1px;height:2px;background:#569cd6"></i><i style="position:absolute;left:8px;top:50px;width:1px;height:2px;background:#9cdcfe"></i><i style="position:absolute;left:9px;top:50px;width:1px;height:2px;background:#9cdcfe"></i><i style="position:absolute;left:10px;top:50px;width:1px;height:2px;background:#9cdcfe"></i><i style="position:absolute;left:12px;top:50px;width:1px;height:2px;background:#cccccc"></i><i style="position:absolute;left:14px;top:50px;width:1px;height:2px;background:#4fc1ff"></i><i style="position:absolute;left:15px;top:50px;width:1px;height:2px;background:#cccccc"></i><i style="position:absolute;left:6px;top:52px;width:1px;height:2px;background:#9cdcfe"></i><i style="position:absolute;left:7px;top:52px;width:1px;height:2px;background:#9cdcfe"></i><i style="position:absolute;left:8px;top:52px;width:1px;height:2px;background:#9cdcfe"></i><i style="position:absolute;left:9px;top:52px;width:1px;height:2px;background:#cccccc"></i><i style="position:absolute;left:10px;top:52px;width:1px;height:2px;background:#4fc1ff"></i><i style="position:absolute;left:11px;top:52px;width:1px;height:2px;background:#cccccc"></i><i style="position:absolute;left:12px;top:52px;width:1px;height:2px;background:#4fc1ff"></i><i style="position:absolute;left:13px;top:52px;width:1px;height:2px;background:#4fc1ff"></i><i style="position:absolute;left:14px;top:52px;width:1px;height:2px;background:#4fc1ff"></i><i style="position:absolute;left:15px;top:52px;width:1px;height:2px;background:#cccccc"></i><i style="position:absolute;left:4px;top:54px;width:1px;height:2px;background:#9cdcfe"></i><i style="position:absolute;left:5px;top:54px;width:1px;height:2px;background:#9cdcfe"></i><i style="position:absolute;left:6px;top:54px;width:1px;height:2px;background:#9cdcfe"></i><i style="position:absolute;left:7px;top:54px;width:1px;height:2px;background:#9cdcfe"></i><i style="position:absolute;left:8px;top:54px;width:1px;height:2px;background:#9cdcfe"></i><i style="position:absolute;left:9px;top:54px;width:1px;height:2px;background:#9cdcfe"></i><i style="position:absolute;left:10px;top:54px;width:1px;height:2px;background:#cccccc"></i><i style="position:absolute;left:12px;top:54px;width:1px;height:2px;background:#179fff"></i><i style="position:absolute;left:13px;top:54px;width:1px;height:2px;background:#b5cea8"></i><i style="position:absolute;left:14px;top:54px;width:1px;height:2px;background:#cccccc"></i><i style="position:absolute;left:15px;top:54px;width:1px;height:2px;background:#b5cea8"></i><i style="position:absolute;left:4px;top:56px;width:1px;height:2px;background:#9cdcfe"></i><i style="position:absolute;left:5px;top:56px;width:1px;height:2px;background:#9cdcfe"></i><i style="position:absolute;left:6px;top:56px;width:1px;height:2px;background:#9cdcfe"></i><i style="position:absolute;left:7px;top:56px;width:1px;height:2px;background:#9cdcfe"></i><i style="position:absolute;left:8px;top:56px;width:1px;height:2px;background:#cccccc"></i><i style="position:absolute;left:10px;top:56px;width:1px;height:2px;background:#b5cea8"></i><i style="position:absolute;left:11px;top:56px;width:1px;height:2px;background:#b5cea8"></i><i style="position:absolute;left:14px;top:56px;width:1px;height:2px;background:#6a9955"></i><i style="position:absolute;left:15px;top:56px;width:1px;height:2px;background:#6a9955"></i><i style="position:absolute;left:0px;top:60px;width:1px;height:2px;background:#da70d6"></i><i style="position:absolute;left:1px;top:60px;width:1px;height:2px;background:#ffd700"></i><i style="position:absolute;left:2px;top:60px;width:1px;height:2px;background:#cccccc"></i><i style="position:absolute;left:0px;top:62px;width:1px;height:2px;background:#569cd6"></i><i style="position:absolute;left:1px;top:62px;width:1px;height:2px;background:#569cd6"></i><i style="position:absolute;left:2px;top:62px;width:1px;height:2px;background:#569cd6"></i><i style="position:absolute;left:4px;top:62px;width:1px;height:2px;background:#4fc1ff"></i><i style="position:absolute;left:5px;top:62px;width:1px;height:2px;background:#cccccc"></i><i style="position:absolute;left:6px;top:62px;width:1px;height:2px;background:#9cdcfe"></i><i style="position:absolute;left:7px;top:62px;width:1px;height:2px;background:#9cdcfe"></i><i style="position:absolute;left:8px;top:62px;width:1px;height:2px;background:#9cdcfe"></i><i style="position:absolute;left:9px;top:62px;width:1px;height:2px;background:#9cdcfe"></i><i style="position:absolute;left:10px;top:62px;width:1px;height:2px;background:#9cdcfe"></i><i style="position:absolute;left:11px;top:62px;width:1px;height:2px;background:#9cdcfe"></i><i style="position:absolute;left:12px;top:62px;width:1px;height:2px;background:#9cdcfe"></i><i style="position:absolute;left:13px;top:62px;width:1px;height:2px;background:#9cdcfe"></i><i style="position:absolute;left:14px;top:62px;width:1px;height:2px;background:#cccccc"></i><i style="position:absolute;left:15px;top:62px;width:1px;height:2px;background:#dcdcaa"></i><i style="position:absolute;left:11px;top:66px;width:1px;height:2px;background:#569cd6"></i><i style="position:absolute;left:12px;top:66px;width:1px;height:2px;background:#569cd6"></i><i style="position:absolute;left:13px;top:66px;width:1px;height:2px;background:#569cd6"></i><i style="position:absolute;left:15px;top:66px;width:1px;height:2px;background:#9cdcfe"></i><i style="position:absolute;left:14px;top:68px;width:1px;height:2px;background:#9cdcfe"></i><i style="position:absolute;left:15px;top:68px;width:1px;height:2px;background:#9cdcfe"></i><i style="position:absolute;left:14px;top:70px;width:1px;height:2px;background:#9cdcfe"></i><i style="position:absolute;left:15px;top:70px;width:1px;height:2px;background:#9cdcfe"></i><i style="position:absolute;left:14px;top:72px;width:1px;height:2px;background:#9cdcfe"></i><i style="position:absolute;left:15px;top:72px;width:1px;height:2px;background:#9cdcfe"></i><i style="position:absolute;left:14px;top:74px;width:1px;height:2px;background:#9cdcfe"></i><i style="position:absolute;left:15px;top:74px;width:1px;height:2px;background:#9cdcfe"></i><i style="position:absolute;left:12px;top:76px;width:1px;height:2px;background:#ffd700"></i><i style="position:absolute;left:13px;top:76px;width:1px;height:2px;background:#179fff"></i><i style="position:absolute;left:14px;top:76px;width:1px;height:2px;background:#cccccc"></i><i style="position:absolute;left:12px;top:78px;width:1px;height:2px;background:#569cd6"></i><i style="position:absolute;left:13px;top:78px;width:1px;height:2px;background:#569cd6"></i><i style="position:absolute;left:14px;top:78px;width:1px;height:2px;background:#569cd6"></i><i style="position:absolute;left:8px;top:80px;width:1px;height:2px;background:#da70d6"></i><i style="position:absolute;left:9px;top:80px;width:1px;height:2px;background:#ffd700"></i><i style="position:absolute;left:10px;top:80px;width:1px;height:2px;background:#cccccc"></i><i style="position:absolute;left:0px;top:82px;width:1px;height:2px;background:#6a9955"></i><i style="position:absolute;left:1px;top:82px;width:1px;height:2px;background:#6a9955"></i><i style="position:absolute;left:2px;top:82px;width:2px;height:2px;background:#6a9955"></i><i style="position:absolute;left:4px;top:82px;width:2px;height:2px;background:#6a9955"></i><i style="position:absolute;left:6px;top:82px;width:2px;height:2px;background:#6a9955"></i><i style="position:absolute;left:8px;top:82px;width:2px;height:2px;background:#6a9955"></i><i style="position:absolute;left:10px;top:82px;width:2px;height:2px;background:#6a9955"></i><i style="position:absolute;left:12px;top:82px;width:1px;height:2px;background:#6a9955"></i><i style="position:absolute;left:13px;top:82px;width:1px;height:2px;background:#6a9955"></i><i style="position:absolute;left:14px;top:82px;width:1px;height:2px;background:#6a9955"></i><i style="position:absolute;left:15px;top:82px;width:2px;height:2px;background:#6a9955"></i><i style="position:absolute;left:0px;top:84px;width:2px;height:2px;background:#6a9955;opacity:0.6"></i><i style="position:absolute;left:3px;top:84px;width:3px;height:2px;background:#6a9955;opacity:0.75"></i><i style="position:absolute;left:7px;top:84px;width:9px;height:2px;background:#6a9955;opacity:0.75"></i><i style="position:absolute;left:0px;top:86px;width:2px;height:2px;background:#6a9955;opacity:0.6"></i><i style="position:absolute;left:11px;top:86px;width:5px;height:2px;background:#6a9955;opacity:0.75"></i><i style="position:absolute;left:0px;top:88px;width:2px;height:2px;background:#6a9955;opacity:0.6"></i><i style="position:absolute;left:14px;top:88px;width:2px;height:2px;background:#6a9955;opacity:0.6"></i><i style="position:absolute;left:0px;top:90px;width:2px;height:2px;background:#6a9955;opacity:0.6"></i><i style="position:absolute;left:11px;top:90px;width:2px;height:2px;background:#6a9955;opacity:0.6"></i><i style="position:absolute;left:0px;top:92px;width:2px;height:2px;background:#6a9955;opacity:0.6"></i><i style="position:absolute;left:13px;top:92px;width:3px;height:2px;background:#6a9955;opacity:0.75"></i><i style="position:absolute;left:0px;top:94px;width:2px;height:2px;background:#6a9955;opacity:0.6"></i><i style="position:absolute;left:7px;top:94px;width:3px;height:2px;background:#6a9955;opacity:0.75"></i><i style="position:absolute;left:11px;top:94px;width:5px;height:2px;background:#6a9955;opacity:0.75"></i><i style="position:absolute;left:0px;top:96px;width:2px;height:2px;background:#6a9955;opacity:0.6"></i><i style="position:absolute;left:12px;top:96px;width:4px;height:2px;background:#6a9955;opacity:0.75"></i><i style="position:absolute;left:0px;top:98px;width:2px;height:2px;background:#6a9955;opacity:0.6"></i><i style="position:absolute;left:14px;top:98px;width:2px;height:2px;background:#6a9955;opacity:0.6"></i><i style="position:absolute;left:0px;top:100px;width:2px;height:2px;background:#6a9955;opacity:0.6"></i><i style="position:absolute;left:11px;top:100px;width:2px;height:2px;background:#6a9955;opacity:0.6"></i><i style="position:absolute;left:0px;top:102px;width:2px;height:2px;background:#6a9955;opacity:0.6"></i><i style="position:absolute;left:13px;top:102px;width:3px;height:2px;background:#6a9955;opacity:0.75"></i><i style="position:absolute;left:0px;top:104px;width:2px;height:2px;background:#6a9955;opacity:0.6"></i><i style="position:absolute;left:14px;top:104px;width:2px;height:2px;background:#6a9955;opacity:0.6"></i><i style="position:absolute;left:0px;top:106px;width:2px;height:2px;background:#6a9955;opacity:0.6"></i><i style="position:absolute;left:7px;top:106px;width:9px;height:2px;background:#6a9955;opacity:0.75"></i><i style="position:absolute;left:0px;top:112px;width:2px;height:2px;background:#6a9955;opacity:0.6"></i><i style="position:absolute;left:3px;top:112px;width:13px;height:2px;background:#6a9955;opacity:0.75"></i><i style="position:absolute;left:0px;top:114px;width:2px;height:2px;background:#6a9955;opacity:0.6"></i><i style="position:absolute;left:3px;top:114px;width:2px;height:2px;background:#6a9955;opacity:0.6"></i><i style="position:absolute;left:6px;top:114px;width:3px;height:2px;background:#6a9955;opacity:0.75"></i><i style="position:absolute;left:10px;top:114px;width:6px;height:2px;background:#6a9955;opacity:0.75"></i><i style="position:absolute;left:0px;top:118px;width:2px;height:2px;background:#6a9955;opacity:0.6"></i><i style="position:absolute;left:3px;top:118px;width:2px;height:2px;background:#6a9955;opacity:0.6"></i><i style="position:absolute;left:6px;top:118px;width:2px;height:2px;background:#6a9955;opacity:0.6"></i><i style="position:absolute;left:9px;top:118px;width:1px;height:2px;background:#6a9955;opacity:0.6"></i><i style="position:absolute;left:11px;top:118px;width:5px;height:2px;background:#6a9955;opacity:0.75"></i><i style="position:absolute;left:0px;top:120px;width:14px;height:2px;background:#6a9955;opacity:0.75"></i><i style="position:absolute;left:0px;top:124px;width:2px;height:2px;background:#6a9955;opacity:0.6"></i><i style="position:absolute;left:3px;top:124px;width:6px;height:2px;background:#6a9955;opacity:0.75"></i><i style="position:absolute;left:10px;top:124px;width:6px;height:2px;background:#6a9955;opacity:0.75"></i><i style="position:absolute;left:0px;top:128px;width:2px;height:2px;background:#6a9955;opacity:0.6"></i><i style="position:absolute;left:3px;top:128px;width:2px;height:2px;background:#6a9955;opacity:0.6"></i><i style="position:absolute;left:6px;top:128px;width:1px;height:2px;background:#6a9955;opacity:0.6"></i><i style="position:absolute;left:8px;top:128px;width:2px;height:2px;background:#6a9955;opacity:0.6"></i><i style="position:absolute;left:11px;top:128px;width:5px;height:2px;background:#6a9955;opacity:0.75"></i><i style="position:absolute;left:0px;top:132px;width:2px;height:2px;background:#6a9955;opacity:0.6"></i><i style="position:absolute;left:3px;top:132px;width:3px;height:2px;background:#6a9955;opacity:0.75"></i><i style="position:absolute;left:7px;top:132px;width:1px;height:2px;background:#6a9955;opacity:0.6"></i><i style="position:absolute;left:9px;top:132px;width:2px;height:2px;background:#6a9955;opacity:0.6"></i><i style="position:absolute;left:12px;top:132px;width:4px;height:2px;background:#6a9955;opacity:0.75"></i><i style="position:absolute;left:0px;top:134px;width:16px;height:2px;background:#6a9955;opacity:0.75"></i><i style="position:absolute;left:0px;top:136px;width:13px;height:2px;background:#6a9955;opacity:0.75"></i><i style="position:absolute;left:0px;top:140px;width:2px;height:2px;background:#6a9955;opacity:0.6"></i><i style="position:absolute;left:3px;top:140px;width:4px;height:2px;background:#6a9955;opacity:0.75"></i><i style="position:absolute;left:8px;top:140px;width:8px;height:2px;background:#6a9955;opacity:0.75"></i><i style="position:absolute;left:0px;top:144px;width:2px;height:2px;background:#6a9955;opacity:0.6"></i><i style="position:absolute;left:3px;top:144px;width:1px;height:2px;background:#6a9955;opacity:0.6"></i><i style="position:absolute;left:0px;top:148px;width:2px;height:2px;background:#6a9955;opacity:0.6"></i><i style="position:absolute;left:3px;top:148px;width:6px;height:2px;background:#6a9955;opacity:0.75"></i><i style="position:absolute;left:10px;top:148px;width:6px;height:2px;background:#6a9955;opacity:0.75"></i><i style="position:absolute;left:0px;top:152px;width:2px;height:2px;background:#6a9955;opacity:0.6"></i><i style="position:absolute;left:3px;top:152px;width:1px;height:2px;background:#6a9955;opacity:0.6"></i><i style="position:absolute;left:5px;top:152px;width:9px;height:2px;background:#6a9955;opacity:0.75"></i><i style="position:absolute;left:0px;top:156px;width:2px;height:2px;background:#6a9955;opacity:0.6"></i><i style="position:absolute;left:3px;top:156px;width:2px;height:2px;background:#6a9955;opacity:0.6"></i><i style="position:absolute;left:6px;top:156px;width:10px;height:2px;background:#6a9955;opacity:0.75"></i><i style="position:absolute;left:0px;top:160px;width:2px;height:2px;background:#6a9955;opacity:0.6"></i><i style="position:absolute;left:3px;top:160px;width:2px;height:2px;background:#6a9955;opacity:0.6"></i><i style="position:absolute;left:6px;top:160px;width:10px;height:2px;background:#6a9955;opacity:0.75"></i><i style="position:absolute;left:0px;top:164px;width:2px;height:2px;background:#6a9955;opacity:0.6"></i><i style="position:absolute;left:3px;top:164px;width:1px;height:2px;background:#6a9955;opacity:0.6"></i><i style="position:absolute;left:2px;top:166px;width:9px;height:2px;background:#569cd6"></i><i style="position:absolute;left:0px;top:170px;width:7px;height:2px;background:#569cd6"></i><i style="position:absolute;left:0px;top:172px;width:7px;height:2px;background:#569cd6"></i><div style="position:absolute;left:0;top:0;width:16px;height:180px;background:repeating-linear-gradient(to bottom, rgba(31,31,31,0.6) 0px, rgba(31,31,31,0.6) 1px, rgba(31,31,31,0) 1px, rgba(31,31,31,0) 2px)"></div></div>
</body></html>
